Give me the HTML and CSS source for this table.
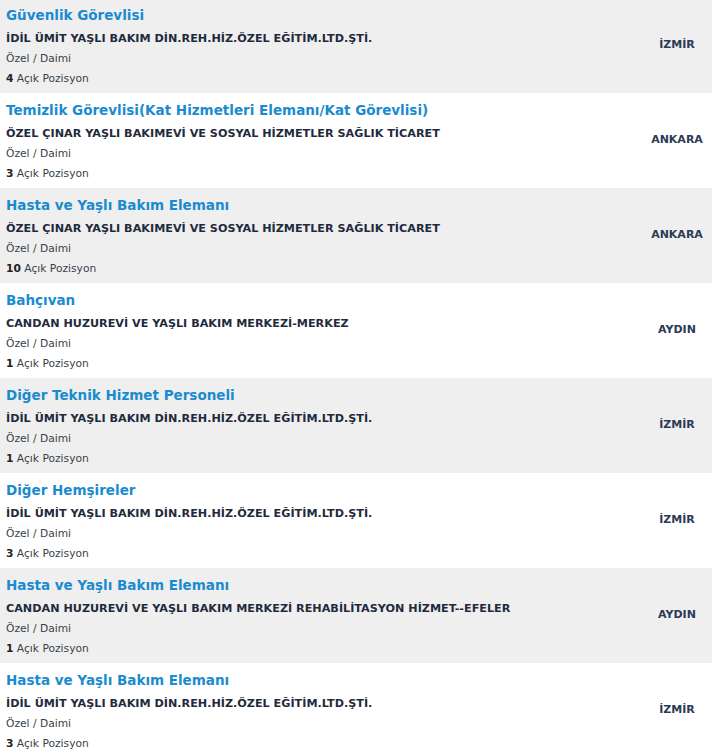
FILE: index.html
```html
<!DOCTYPE html>
<html lang="tr">
<head>
<meta charset="utf-8">
<link rel="stylesheet" href="styles.css">
</head>
<body>
<div class="list">
  <div class="job alt">
    <div class="info">
      <a class="title">Güvenlik Görevlisi</a>
      <div class="company">İDİL ÜMİT YAŞLI BAKIM DİN.REH.HİZ.ÖZEL EĞİTİM.LTD.ŞTİ.</div>
      <div class="meta">Özel / Daimi</div>
      <div class="meta"><b>4</b> Açık Pozisyon</div>
    </div>
    <div class="city">İZMİR</div>
  </div>
  <div class="job">
    <div class="info">
      <a class="title">Temizlik Görevlisi(Kat Hizmetleri Elemanı/Kat Görevlisi)</a>
      <div class="company">ÖZEL ÇINAR YAŞLI BAKIMEVİ VE SOSYAL HİZMETLER SAĞLIK TİCARET</div>
      <div class="meta">Özel / Daimi</div>
      <div class="meta"><b>3</b> Açık Pozisyon</div>
    </div>
    <div class="city">ANKARA</div>
  </div>
  <div class="job alt">
    <div class="info">
      <a class="title">Hasta ve Yaşlı Bakım Elemanı</a>
      <div class="company">ÖZEL ÇINAR YAŞLI BAKIMEVİ VE SOSYAL HİZMETLER SAĞLIK TİCARET</div>
      <div class="meta">Özel / Daimi</div>
      <div class="meta"><b>10</b> Açık Pozisyon</div>
    </div>
    <div class="city">ANKARA</div>
  </div>
  <div class="job">
    <div class="info">
      <a class="title">Bahçıvan</a>
      <div class="company">CANDAN HUZUREVİ VE YAŞLI BAKIM MERKEZİ-MERKEZ</div>
      <div class="meta">Özel / Daimi</div>
      <div class="meta"><b>1</b> Açık Pozisyon</div>
    </div>
    <div class="city">AYDIN</div>
  </div>
  <div class="job alt">
    <div class="info">
      <a class="title">Diğer Teknik Hizmet Personeli</a>
      <div class="company">İDİL ÜMİT YAŞLI BAKIM DİN.REH.HİZ.ÖZEL EĞİTİM.LTD.ŞTİ.</div>
      <div class="meta">Özel / Daimi</div>
      <div class="meta"><b>1</b> Açık Pozisyon</div>
    </div>
    <div class="city">İZMİR</div>
  </div>
  <div class="job">
    <div class="info">
      <a class="title">Diğer Hemşireler</a>
      <div class="company">İDİL ÜMİT YAŞLI BAKIM DİN.REH.HİZ.ÖZEL EĞİTİM.LTD.ŞTİ.</div>
      <div class="meta">Özel / Daimi</div>
      <div class="meta"><b>3</b> Açık Pozisyon</div>
    </div>
    <div class="city">İZMİR</div>
  </div>
  <div class="job alt">
    <div class="info">
      <a class="title">Hasta ve Yaşlı Bakım Elemanı</a>
      <div class="company">CANDAN HUZUREVİ VE YAŞLI BAKIM MERKEZİ REHABİLİTASYON HİZMET--EFELER</div>
      <div class="meta">Özel / Daimi</div>
      <div class="meta"><b>1</b> Açık Pozisyon</div>
    </div>
    <div class="city">AYDIN</div>
  </div>
  <div class="job">
    <div class="info">
      <a class="title">Hasta ve Yaşlı Bakım Elemanı</a>
      <div class="company">İDİL ÜMİT YAŞLI BAKIM DİN.REH.HİZ.ÖZEL EĞİTİM.LTD.ŞTİ.</div>
      <div class="meta">Özel / Daimi</div>
      <div class="meta"><b>3</b> Açık Pozisyon</div>
    </div>
    <div class="city">İZMİR</div>
  </div>
</div>
</body>
</html>
```
FILE: styles.css
```css
html, body {
  margin: 0;
  padding: 0;
  background: #ffffff;
}
body {
  font-family: "DejaVu Sans", Verdana, sans-serif;
  overflow: hidden;
}
.list {
  margin-top: -2px;
}
.job {
  display: flex;
  align-items: center;
  height: 95px;
  box-sizing: border-box;
  padding: 6px 0 4px 6px;
  background: #ffffff;
}
.job.alt {
  background: #efefef;
}
.info {
  flex: 1;
  min-width: 0;
  display: flex;
  flex-direction: column;
  align-self: stretch;
}
.title {
  display: block;
  color: #1a8bcf;
  font-size: 13.5px;
  font-weight: bold;
  line-height: 22px;
  height: 22px;
  margin-bottom: 3px;
}
.company {
  color: #1f2b3d;
  font-size: 11.2px;
  font-weight: bold;
  line-height: 20px;
}
.meta {
  color: #3a3f4a;
  font-size: 10.7px;
  line-height: 20px;
}
.meta b {
  color: #222;
}
.city {
  width: 70px;
  text-align: center;
  color: #2b3a55;
  font-size: 11px;
  font-weight: bold;
  padding-bottom: 5px;
}
```
